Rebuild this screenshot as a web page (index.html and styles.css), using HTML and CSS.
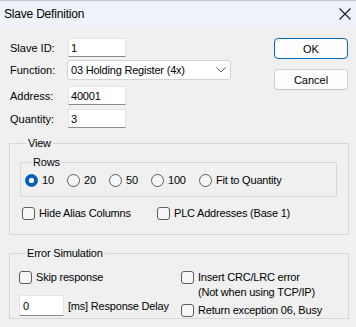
FILE: index.html
```html
<!DOCTYPE html>
<html lang="en">
<head>
    <meta charset="UTF-8">
    <meta name="viewport" content="width=device-width, initial-scale=1.0">
    <title>Slave Definition</title>
    <link rel="stylesheet" href="styles.css">
</head>
<body>

<div class="window">
    <div class="titlebar">
        <span class="title">Slave Definition</span>
        <svg class="close" width="12" height="12" viewBox="0 0 12 12">
            <path d="M0.5 0.5 L11.5 11.5 M11.5 0.5 L0.5 11.5" stroke="#1b1b1b" stroke-width="1.1" fill="none"/>
        </svg>
    </div>

    <div class="top">
        <div class="fields">
            <div class="row r1">
                <label for="slaveId">Slave ID:</label>
                <input class="edit" type="text" id="slaveId" value="1">
            </div>
            <div class="row r2">
                <label>Function:</label>
                <div class="select">
                    <span>03 Holding Register (4x)</span>
                    <svg width="10" height="6" viewBox="0 0 10 6">
                        <path d="M0.5 0.5 L5 5 L9.5 0.5" stroke="#5f5f5f" stroke-width="1" fill="none"/>
                    </svg>
                </div>
            </div>
            <div class="row r3">
                <label for="address">Address:</label>
                <input class="edit" type="text" id="address" value="40001">
            </div>
            <div class="row r4">
                <label for="quantity">Quantity:</label>
                <input class="edit" type="text" id="quantity" value="3">
            </div>
        </div>

        <div class="buttons">
            <button class="btn default">OK</button>
            <button class="btn">Cancel</button>
        </div>
    </div>

    <fieldset class="group view">
        <legend>View</legend>
        <fieldset class="group rows">
            <legend>Rows</legend>
            <div class="radios">
                <label class="opt"><input type="radio" name="rows" checked>10</label>
                <label class="opt"><input type="radio" name="rows">20</label>
                <label class="opt"><input type="radio" name="rows">50</label>
                <label class="opt"><input type="radio" name="rows">100</label>
                <label class="opt"><input type="radio" name="rows">Fit to Quantity</label>
            </div>
        </fieldset>
        <div class="checks">
            <label class="opt"><input type="checkbox">Hide Alias Columns</label>
            <label class="opt"><input type="checkbox">PLC Addresses (Base 1)</label>
        </div>
    </fieldset>

    <fieldset class="group errors">
        <legend>Error Simulation</legend>
        <div class="err-grid">
            <div class="err-left">
                <label class="opt"><input type="checkbox">Skip response</label>
                <div class="delay">
                    <input class="edit delay-input" type="text" value="0">
                    <span>[ms] Response Delay</span>
                </div>
            </div>
            <div class="err-right">
                <label class="opt multi"><input type="checkbox"><span>Insert CRC/LRC error<br>(Not when using TCP/IP)</span></label>
                <label class="opt busy"><input type="checkbox">Return exception 06, Busy</label>
            </div>
        </div>
    </fieldset>
</div>

</body>
</html>
```

FILE: styles.css
```css
body {
    margin: 0;
    background-color: #f0f0f0;
    font-family: 'Liberation Sans', Arial, sans-serif;
    font-size: 11px;
    color: #000;
}

.window {
    width: 356px;
    height: 327px;
    background-color: #f0f0f0;
    padding: 0 7px 0 9px;
    box-sizing: border-box;
    overflow: hidden;
}

.titlebar {
    height: 27px;
    margin: 0 -7px 0 -9px;
    padding: 0 5px 0 4px;
    background-color: #eef3f9;
    border-top: 1px solid #c4c8ce;
    box-sizing: border-box;
    display: flex;
    align-items: center;
    justify-content: space-between;
}

.title {
    font-size: 12px;
    letter-spacing: -0.2px;
}

/* top part: fields + buttons */
.top {
    display: flex;
    justify-content: space-between;
    padding-top: 11px;
}

.fields {
    padding-left: 1px;
}

.row {
    display: flex;
    align-items: center;
}

.row label {
    width: 58px;
}

.r1 { margin-bottom: 3px; }
.r2 { margin-bottom: 6px; }
.r3 { margin-bottom: 4px; }

.edit {
    width: 58px;
    height: 19px;
    margin: 0;
    padding: 0 2px;
    border: 1px solid #e4e4e4;
    border-bottom-color: #8a8a8a;
    border-radius: 0;
    background-color: #fff;
    box-sizing: border-box;
    font-family: inherit;
    font-size: 11px;
    letter-spacing: -0.2px;
    color: #000;
}

.select {
    width: 164px;
    height: 20px;
    margin-left: -1px;
    padding: 0 4px 0 3px;
    border: 1px solid #d2d2d2;
    border-radius: 3px;
    background-color: #fff;
    box-sizing: border-box;
    display: flex;
    align-items: center;
    justify-content: space-between;
    letter-spacing: -0.2px;
}

.buttons {
    display: flex;
    flex-direction: column;
    gap: 10px;
    margin-right: 1px;
}

.btn {
    width: 74px;
    height: 21px;
    margin: 0;
    padding: 0;
    border: 1px solid #d3d3d3;
    border-bottom-color: #c2c2c2;
    border-radius: 4px;
    background-color: #fdfdfd;
    font-family: inherit;
    font-size: 11px;
    color: #000;
}

.btn.default {
    border: 1px solid #0067c0;
}

/* group boxes */
.group {
    margin: 0;
    border: 1px solid #d6d6d6;
    min-width: 0;
}

.group legend {
    margin-left: 6px;
    padding: 0 2px;
    line-height: 13px;
    letter-spacing: -0.2px;
}

.view {
    margin-top: 9px;
    padding: 6px 11px 14px 10px;
}

.rows {
    padding: 4px 4px 9px 4px;
}

.radios {
    display: grid;
    grid-template-columns: 42px 42px 42px 48px auto;
}

.opt {
    display: flex;
    align-items: center;
    gap: 4px;
    line-height: 14px;
    letter-spacing: -0.2px;
    white-space: nowrap;
}

input[type="radio"] {
    appearance: none;
    width: 13px;
    height: 13px;
    margin: 0;
    border: 1px solid #5d5d5d;
    border-radius: 50%;
    background-color: #f7f7f7;
    flex-shrink: 0;
}

input[type="radio"]:checked {
    border-color: #005fb8;
    background: radial-gradient(circle, #fff 0 2.4px, #005fb8 3px);
}

input[type="checkbox"] {
    appearance: none;
    width: 13px;
    height: 13px;
    margin: 0;
    border: 1px solid #5d5d5d;
    border-radius: 3px;
    background-color: #f7f7f7;
    flex-shrink: 0;
}

.checks {
    display: grid;
    grid-template-columns: 135px auto;
    margin-top: 9px;
    padding-left: 2px;
}

.errors {
    margin-top: 12px;
    padding: 10px 9px 0 9px;
}

.err-grid {
    display: grid;
    grid-template-columns: 162px auto;
}

.err-left .opt,
.err-right .opt {
    line-height: 15px;
}

.delay {
    display: flex;
    align-items: center;
    gap: 4px;
    margin-top: 10px;
    letter-spacing: -0.2px;
}

.delay-input {
    width: 45px;
    height: 21px;
    padding-left: 3px;
}

.opt.multi {
    align-items: flex-start;
}

.opt.multi input {
    margin-top: 1px;
}

.opt.busy {
    margin-top: 3px;
}
```
